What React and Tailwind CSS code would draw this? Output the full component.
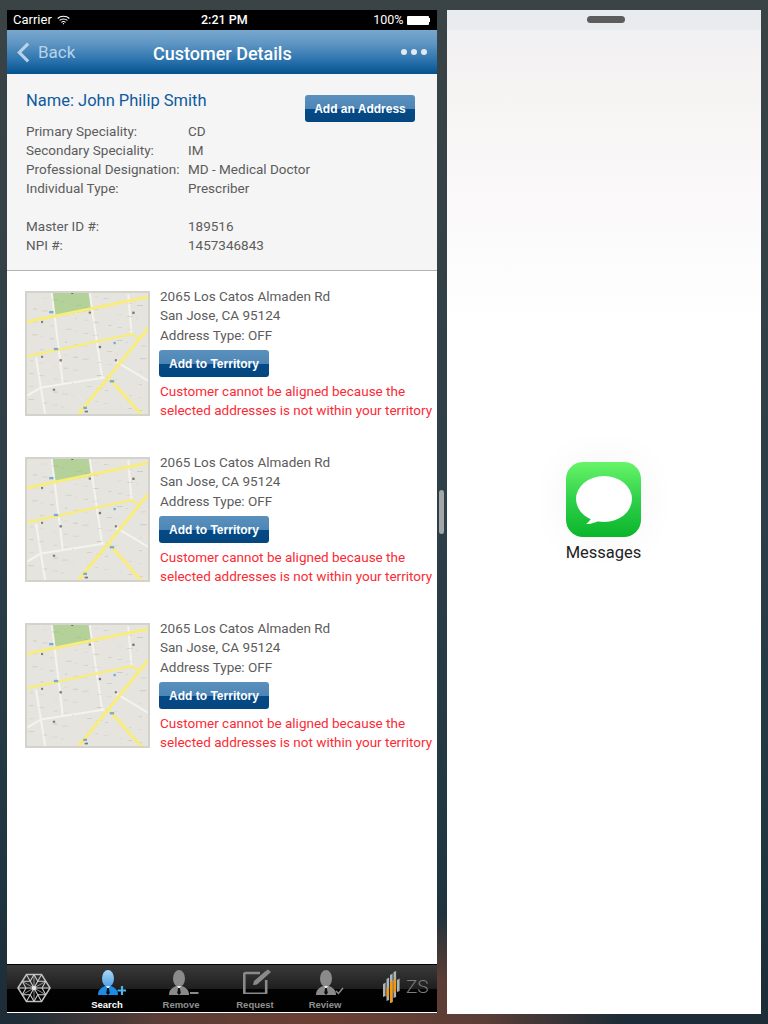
import React from "react";

const F = { fontFamily: 'Roboto, "Liberation Sans", sans-serif' };

const specks = Array.from({ length: 90 }, (_, i) => ({
  x: 40 + ((i * 97) % 355),
  y: 40 + ((i * 61) % 355),
  w: 4 + ((i * 7) % 16),
  h: 2 + ((i * 3) % 3),
  o: 0.15 + ((i * 13) % 5) / 12,
}));

function MapThumb() {
  return (
    <div className="w-[125px] h-[125px] shrink-0 overflow-hidden border-[2px] border-[#d3d2cc] bg-[#e6e4de]">
      <svg viewBox="38 36 361 364" className="w-full h-full block blur-[0.7px]" preserveAspectRatio="none">
        <rect x="30" y="30" width="380" height="380" fill="#e6e4de" />
        <polygon points="112,30 225,30 230,88 118,108" fill="#b3d198" />
        <g stroke="#f4f3ee" strokeWidth="6" fill="none">
          <path d="M112 36 L145 310" />
          <path d="M225 36 L262 290" />
          <path d="M65 230 L92 400" />
          <path d="M80 320 L270 290" />
          <path d="M340 40 L350 160" />
          <path d="M38 345 L80 320" />
          <path d="M300 240 L399 300" />
        </g>
        <g fill="#9b9a94">
          {specks.map((s, i) => (
            <rect key={i} x={s.x} y={s.y} width={s.w} height={s.h} opacity={s.o} />
          ))}
        </g>
        <g fill="#4a4a4a" opacity="0.7">
          <rect x="80" y="120" width="6" height="6" /><rect x="135" y="235" width="7" height="7" />
          <rect x="252" y="195" width="7" height="7" /><rect x="222" y="92" width="7" height="6" />
          <rect x="352" y="92" width="7" height="7" /><rect x="300" y="235" width="6" height="7" />
          <rect x="115" y="324" width="7" height="6" /><rect x="210" y="390" width="10" height="5" />
          <rect x="170" y="33" width="6" height="6" /><rect x="80" y="225" width="6" height="6" />
        </g>
        <g stroke="#f8ec7a" fill="none" strokeWidth="9">
          <path d="M30 124 L405 47" />
          <path d="M30 228 L350 160 L368 170" strokeWidth="7" />
          <path d="M405 135 L188 405" />
          <path d="M285 295 L385 408" />
        </g>
        <g fill="#7ba9cf">
          <rect x="104" y="90" width="13" height="7" /><rect x="118" y="201" width="13" height="7" />
          <rect x="285" y="298" width="13" height="7" /><rect x="206" y="378" width="11" height="7" />
          <rect x="296" y="183" width="7" height="7" />
        </g>
      </svg>
    </div>
  );
}

const btn =
  "block w-[110px] h-[27px] rounded-[3px] bg-[linear-gradient(#5a90bd_0%,#4d86b6_50%,#054a87_52%,#04467f_100%)] text-white text-[12px] font-bold leading-[28px]";
const arial = { fontFamily: '"Liberation Sans", sans-serif' };

function AddressCard() {
  return (
    <div className="flex h-[166px] pl-[18px]">
      <MapThumb />
      <div className="ml-[10px] text-[13.5px] leading-[19.4px] text-[#5c5c5c] -mt-[4px]">
        <div>2065 Los Catos Almaden Rd</div>
        <div>San Jose, CA 95124</div>
        <div>Address Type: OFF</div>
        <button className={`${btn} mt-[5px] -ml-[1px]`} style={arial}>
          Add to Territory
        </button>
        <div className="mt-[5px] text-[#fb2b36] whitespace-nowrap">Customer cannot be aligned because the</div>
        <div className="-mt-[1px] text-[#fb2b36] whitespace-nowrap">selected addresses is not within your territory</div>
      </div>
    </div>
  );
}

function PersonBody({ color, head, fill }) {
  return (
    <>
      <ellipse cx="10" cy="8.5" rx="6" ry="8.5" fill={head || color} />
      <path d="M0 25 C0 20 2.5 18 7 16 L13 16 C17.5 18 20 20 20 25 Z" fill={fill || color} />
      <path d="M8 16 L12 16 L10 19 Z" fill="#eee" />
      <path d="M9.2 18 L10.8 18 L11.8 23 L10 25 L8.2 23 Z" fill="#0c0c0c" />
    </>
  );
}

function Tab({ label, active, w, icon, children }) {
  return (
    <div className={`flex flex-col items-center ${w}`}>
      <div className={`h-[25px] flex items-start ${icon}`}>{children}</div>
      <div
        className={`text-[9.5px] font-bold leading-[12px] mt-[4px] ${active ? "text-white" : "text-[#8f8f8f]"}`}
        style={arial}
      >
        {label}
      </div>
    </div>
  );
}

function Hex() {
  const c = [17, 15];
  const pts = [[0, 15], [9, 0.8], [25, 0.8], [34, 15], [25, 29.2], [9, 29.2]];
  return (
    <svg viewBox="-1 0 36 30" className="w-[34px] h-[30px] shrink-0">
      <polygon points={pts.map((p) => p.join(",")).join(" ")} fill="none" stroke="#bdbdbd" strokeWidth="1.6" />
      {pts.map((p, i) => {
        const n = pts[(i + 1) % 6];
        const m = [(p[0] + n[0]) / 2, (p[1] + n[1]) / 2];
        return (
          <g key={i} stroke="#cfcfcf" strokeWidth="1.1" fill="none">
            <path d={`M${p[0]} ${p[1]} L${c[0]} ${c[1]}`} />
            <path d={`M${m[0]} ${m[1]} L${c[0]} ${c[1]}`} strokeWidth="0.7" />
            <path d={`M${m[0]} ${m[1]} L${(c[0] + p[0]) / 2} ${(c[1] + p[1]) / 2} M${m[0]} ${m[1]} L${(c[0] + n[0]) / 2} ${(c[1] + n[1]) / 2}`} />
          </g>
        );
      })}
      <circle cx="17" cy="15" r="2.4" fill="#e5e5e5" />
    </svg>
  );
}

function Info({ label, value }) {
  return (
    <div className="flex h-[19px] leading-[19px]">
      <div className="w-[162px] shrink-0">{label}</div>
      <div>{value}</div>
    </div>
  );
}

export default function App() {
  return (
    <div
      className="relative w-[768px] h-[1024px] overflow-hidden flex gap-[10px] pl-[7px] pt-[10px] bg-[radial-gradient(ellipse_300px_120px_at_320px_1024px,#6b3f33_0%,#5a3d36_55%,transparent_100%),linear-gradient(180deg,#3a4346_0%,#2d3f48_50%,#1f3640_85%,#1d2c36_100%)]"
      style={F}
    >
      <div className="w-[430px] h-[1003px] flex flex-col bg-white">
        <div className="h-[20px] shrink-0 bg-black text-white text-[13px] flex items-center justify-between pl-[6px] pr-[7px] relative">
          <div className="flex items-center gap-[5px]">
            <span>Carrier</span>
            <svg viewBox="0 0 14 10" className="w-[13px] h-[10px]" fill="none" stroke="#fff" strokeWidth="1.2">
              <path d="M0.7 3.4 C4 0.2 10 0.2 13.3 3.4" />
              <path d="M2.8 5.5 C5 3.4 9 3.4 11.2 5.5" />
              <path d="M4.8 7.5 C6 6.5 8 6.5 9.2 7.5" />
              <circle cx="7" cy="9" r="0.7" fill="#fff" stroke="none" />
            </svg>
          </div>
          <span className="absolute left-[194px] font-medium text-[12.5px]">2:21 PM</span>
          <div className="flex items-center gap-[3px]">
            <span className="text-[12.5px]">100%</span>
            <span className="flex items-center">
              <span className="block w-[22px] h-[9px] bg-white rounded-[1px]" />
              <span className="block w-[1.5px] h-[4px] bg-white" />
            </span>
          </div>
        </div>

        <div className="h-[44px] shrink-0 relative flex items-center justify-between pl-[10px] pr-[10px] bg-[linear-gradient(#79a7cd_0%,#5f96c3_30%,#2a72ad_70%,#04528f_100%)]">
          <div className="flex items-center gap-[8px] text-[#b9d2e8] text-[17px]">
            <svg viewBox="0 0 14 22" className="w-[13px] h-[21px]" fill="none" stroke="#b9d2e8" strokeWidth="3.4">
              <path d="M12 1.5 L2.5 11 L12 20.5" />
            </svg>
            <span className="pt-[1px]">Back</span>
          </div>
          <div className="absolute left-[146px] top-[11px] text-white text-[18px] font-medium leading-[26px]">Customer Details</div>
          <div className="flex gap-[3.5px]">
            <span className="w-[6.5px] h-[6.5px] rounded-full bg-[#e3e9ef]" />
            <span className="w-[6.5px] h-[6.5px] rounded-full bg-[#e3e9ef]" />
            <span className="w-[6.5px] h-[6.5px] rounded-full bg-[#e3e9ef]" />
          </div>
        </div>

        <div className="h-[197px] shrink-0 bg-[#f5f5f5] border-b border-[#b4b4b4] pl-[19px] pt-[16px] text-[13.5px] text-[#5c5c5c] relative">
          <div className="text-[#0f5a9c] text-[16.5px] leading-[22px] mb-[10px]">Name: John Philip Smith</div>
          <Info label="Primary Speciality:" value="CD" />
          <Info label="Secondary Speciality:" value="IM" />
          <Info label="Professional Designation:" value="MD - Medical Doctor" />
          <Info label="Individual Type:" value="Prescriber" />
          <div className="h-[19px]" />
          <Info label="Master ID #:" value="189516" />
          <Info label="NPI #:" value="1457346843" />
          <button className={`${btn} absolute left-[298px] top-[21px]`} style={arial}>
            Add an Address
          </button>
        </div>

        <div className="flex-1 pt-[20px]">
          <AddressCard />
          <AddressCard />
          <AddressCard />
        </div>

        <div className="h-[49px] shrink-0 flex items-start pl-[10px] bg-[linear-gradient(#3a3a3a_0%,#1f1f1f_50%,#030303_52%,#000_100%)] border-t border-black border-b-[1px] border-b-white">
          <div className="mt-[8px]"><Hex /></div>
          <div className="flex items-start pt-[5px] ml-[19px]">
            <Tab label="Search" active w="w-[74px]" icon="ml-[10px]">
              <svg viewBox="0 0 28 25" className="w-[28px] h-[25px]">
                <defs>
                  <linearGradient id="hb" x1="0" y1="0" x2="0" y2="1">
                    <stop offset="0" stopColor="#a8d6f8" />
                    <stop offset="1" stopColor="#4f9fe6" />
                  </linearGradient>
                </defs>
                <PersonBody color="#1c8de6" head="url(#hb)" />
                <path d="M24 16 V25 M19.5 20.5 H28" stroke="#4fb4e6" strokeWidth="2.2" />
              </svg>
            </Tab>
            <Tab label="Remove" w="w-[74px]" icon="ml-[6px]">
              <svg viewBox="0 0 30 25" className="w-[30px] h-[25px]">
                <PersonBody color="#8a8a8a" />
                <path d="M21 23 H29.5" stroke="#8a8a8a" strokeWidth="2" />
              </svg>
            </Tab>
            <Tab label="Request" w="w-[74px]" icon="ml-[3px]">
              <svg viewBox="0 0 28 25" className="w-[28px] h-[25px] -mt-[1px]">
                <path d="M17 4 H2.5 Q1.3 4 1.3 5.2 V23.7 Q1.3 24.8 2.5 24.8 H22 Q23.2 24.8 23.2 23.7 V11" fill="none" stroke="#8a8a8a" strokeWidth="2.6" />
                <path d="M10 16 L11 12 L22 2.5 L25 0.5 L28 3 L14 15.5 Z" fill="#8a8a8a" />
              </svg>
            </Tab>
            <Tab label="Review" w="w-[66px]" icon="ml-[9px]">
              <svg viewBox="0 0 28 25" className="w-[28px] h-[25px]">
                <PersonBody color="#8a8a8a" />
                <path d="M20 21 L22.5 23.5 L27 18" fill="none" stroke="#8a8a8a" strokeWidth="1.5" />
              </svg>
            </Tab>
          </div>
          <div className="flex items-center ml-[25px] mt-[6px]">
            <svg viewBox="0 0 17 32" className="w-[17px] h-[32px]">
              <g fill="#a9b4bb">
                <polygon points="0,13 2.6,11.5 2.6,25 0,26" />
                <polygon points="3.5,8 6.1,6.5 6.1,29 3.5,30" />
                <polygon points="7,4 9.6,2.5 9.6,31 7,32" />
                <polygon points="10.5,1 13.1,0 13.1,26 10.5,27" />
                <polygon points="14,9 16.6,7.5 16.6,20 14,21" />
              </g>
              <g fill="#ef9a17">
                <polygon points="3.5,17 6.1,15.5 6.1,25 3.5,26" />
                <polygon points="7,11 9.6,9.5 9.6,31 7,32" />
                <polygon points="10.5,9 13.1,7.5 13.1,21 10.5,22" />
              </g>
            </svg>
            <span className="text-[#7d7d7d] text-[19px] font-light leading-[30px] ml-[6px]">ZS</span>
          </div>
        </div>
      </div>

      <div className="w-[314px] h-[1004px] flex flex-col bg-white">
        <div className="h-[20px] shrink-0 bg-[#e9ecee] flex justify-center pt-[6px]">
          <div className="w-[38px] h-[7px] ml-[4px] rounded-full bg-[#5c5c5c]" />
        </div>
        <div className="flex-1 bg-[linear-gradient(#f1f0f2_0%,#f6f3f3_6%,#faf8f8_16%,#ffffff_30%)] flex flex-col items-center pt-[432px]">
          <div className="w-[75px] h-[75px] -ml-[1px] rounded-[17px] bg-[linear-gradient(#68f468_0%,#2fd14a_50%,#0ab52a_100%)] shadow-[0_0_40px_rgba(0,0,0,0.05)]">
            <svg viewBox="0 0 75 75" className="w-[75px] h-[75px]">
              <ellipse cx="38" cy="37" rx="28" ry="23" fill="#fff" />
              <path d="M27 52 C26 56 23 60 20 62 C26 62 32 60 37 56 Z" fill="#fff" />
            </svg>
          </div>
          <div className="mt-[6px] -ml-[1px] text-[16.5px] leading-[20px] text-[#222]">Messages</div>
        </div>
      </div>

      <div className="absolute left-[439px] top-[490px] w-[5px] h-[44px] rounded-full bg-[#a4a6a8]" />
    </div>
  );
}
